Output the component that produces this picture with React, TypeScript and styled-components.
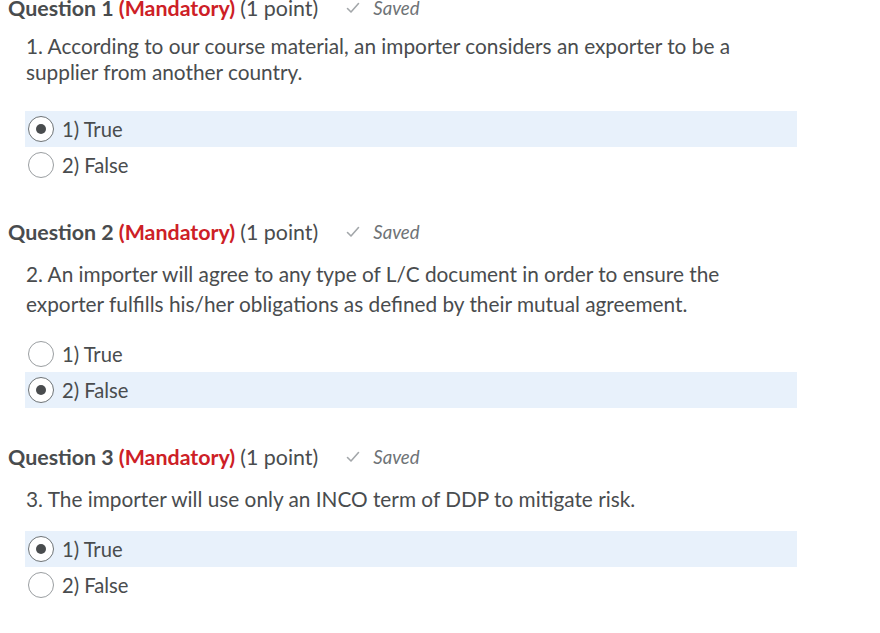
import React from "react";
import styled, { createGlobalStyle } from "styled-components";

const Global = createGlobalStyle`
  html, body { margin: 0; padding: 0; background: #ffffff; }
  body { font-family: Lato, "Open Sans", sans-serif; color: #494c4e; }
`;

const Page = styled.div`
  display: flex;
  flex-direction: column;
  gap: 41px;
  padding-left: 8px;
`;

const Question = styled.section`
  display: flex;
  flex-direction: column;
`;

const Header = styled.div`
  display: flex;
  align-items: baseline;
  height: 24px;
  line-height: 16px;
  font-size: 21.4px;
  white-space: nowrap;
`;

const Title = styled.span`
  font-weight: 700;
  color: #494c4e;
`;

const Mandatory = styled.span`
  font-weight: 700;
  color: #cd2026;
  margin-left: 5px;
`;

const Points = styled.span`
  color: #494c4e;
  margin-left: 5px;
`;

const Saved = styled.span`
  display: inline-flex;
  align-items: center;
  gap: 13px;
  margin-left: 28px;
  font-size: 18.6px;
  font-style: italic;
  color: #6e7376;
  align-self: flex-start;
`;

const Body = styled.div<{ $lh: number; $top: number }>`
  margin: ${(p) => p.$top}px 0 0 18px;
  font-size: 20.8px;
  line-height: ${(p) => p.$lh}px;
  color: #494c4e;
  max-width: 740px;
`;

const Options = styled.div<{ $top: number }>`
  display: flex;
  flex-direction: column;
  margin: ${(p) => p.$top}px 0 0 17px;
  width: 772px;
`;

const Row = styled.label<{ $selected: boolean }>`
  display: flex;
  align-items: center;
  gap: 8px;
  height: 36px;
  padding-left: 3px;
  background: ${(p) => (p.$selected ? "#e8f1fb" : "transparent")};
  font-size: 20.2px;
  color: #494c4e;
`;

const Radio = styled.span<{ $checked: boolean }>`
  box-sizing: border-box;
  width: 26px;
  height: 26px;
  border-radius: 50%;
  border: 1.5px solid ${(p) => (p.$checked ? "#6e7376" : "#9a9ea1")};
  background: #ffffff;
  display: flex;
  align-items: center;
  justify-content: center;
  &::after {
    content: "";
    width: 10px;
    height: 10px;
    border-radius: 50%;
    background: #494c4e;
    display: ${(p) => (p.$checked ? "block" : "none")};
  }
`;

const Check = () => (
  <svg width="14" height="12" viewBox="0 0 14 12" fill="none">
    <path d="M1.5 6.5 L5 10 L12.5 1.5" stroke="#a3a7aa" strokeWidth="1.6" strokeLinecap="round" strokeLinejoin="round" />
  </svg>
);

type Q = {
  n: number;
  text: string;
  selected: number;
  lh: number;
  top: number;
  optTop: number;
};

const questions: Q[] = [
  {
    n: 1,
    text: "1. According to our course material, an importer considers an exporter to be a supplier from another country.",
    selected: 0,
    lh: 26,
    top: 9,
    optTop: 26,
  },
  {
    n: 2,
    text: "2. An importer will agree to any type of L/C document in order to ensure the exporter fulfills his/her obligations as defined by their mutual agreement.",
    selected: 1,
    lh: 30,
    top: 11,
    optTop: 17,
  },
  {
    n: 3,
    text: "3. The importer will use only an INCO term of DDP to mitigate risk.",
    selected: 0,
    lh: 30,
    top: 11,
    optTop: 17,
  },
];

const labels = ["1) True", "2) False"];

export default function App() {
  return (
    <>
      <Global />
      <Page>
        {questions.map((q) => (
          <Question key={q.n}>
            <Header>
              <Title>Question {q.n}</Title>
              <Mandatory>(Mandatory)</Mandatory>
              <Points>(1 point)</Points>
              <Saved>
                <Check />
                Saved
              </Saved>
            </Header>
            <Body $lh={q.lh} $top={q.top}>{q.text}</Body>
            <Options $top={q.optTop}>
              {labels.map((l, i) => (
                <Row key={l} $selected={q.selected === i}>
                  <Radio $checked={q.selected === i} />
                  {l}
                </Row>
              ))}
            </Options>
          </Question>
        ))}
      </Page>
    </>
  );
}
